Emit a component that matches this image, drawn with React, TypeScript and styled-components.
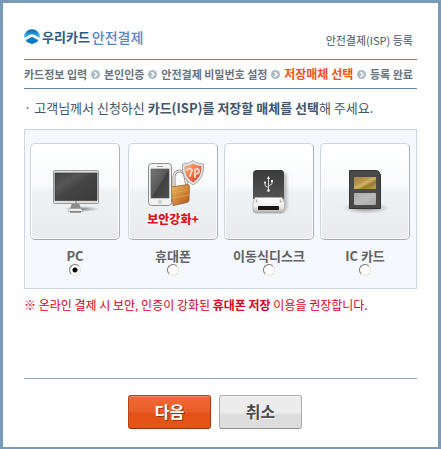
import React, { useState } from 'react';
import styled, { createGlobalStyle, css } from 'styled-components';

const GlobalStyle = createGlobalStyle`
  *, *::before, *::after { box-sizing: border-box; }
  html, body, #root { height: 100%; }
  body {
    margin: 0;
    background: #fff;
    color: #42566b;
    font-family: "Liberation Sans", "Noto Sans CJK KR", sans-serif;
  }
`;

const Page = styled.main`
  display: flex;
  flex-direction: column;
  min-height: 100%;
  padding: 21px;
  padding-bottom: 18px;
  border: 3px solid #7899b8;
  border-bottom-width: 2px;
  background: #fff;
`;

const Header = styled.header`
  display: flex;
  justify-content: space-between;
  align-items: center;
  height: 35px;
  padding: 0 4px 10px 0;
`;

const Brand = styled.h1`
  display: flex;
  align-items: center;
  gap: 2px;
  margin: 0;
  color: #2c5a85;
  font: bold 13px/20px "Noto Sans CJK KR", sans-serif;
`;

const Service = styled.span`
  color: #5585cc;
  font-size: 14px;
  font-weight: 500;
`;

const PageTitle = styled.span`
  padding-top: 7px;
  color: #42566b;
  font: 11px/16px "Noto Sans CJK KR", sans-serif;
`;

const Steps = styled.ol`
  display: flex;
  justify-content: space-between;
  align-items: center;
  height: 30px;
  margin: 0;
  padding: 0 4px 0 0;
  border-top: 1px solid #6486a8;
  border-bottom: 1px solid #6486a8;
  list-style: none;
`;

const Step = styled.li<{ $current?: boolean }>`
  display: flex;
  align-items: center;
  gap: 3px;
  color: #667380;
  font: bold 11px/18px "Noto Sans CJK KR", sans-serif;
  white-space: nowrap;
  ${(p) => p.$current && css`
    color: #f9501a;
    font-size: 12px;
  `}
`;

const Guide = styled.p`
  margin: 0;
  padding: 9px 0 11px;
  font: 13px/20px "Noto Sans CJK KR", sans-serif;
  white-space: nowrap;
`;

const MediaPanel = styled.fieldset`
  display: grid;
  grid-template-columns: 98fr 96fr 96fr 90fr;
  min-width: 0;
  margin: 0;
  padding: 13px 6px 12px 5px;
  border: 1px solid #cdd6df;
  background: #f5f8fc;
`;

const MediaOption = styled.label`
  display: flex;
  flex-direction: column;
  align-items: center;
  width: 90px;
  cursor: pointer;
`;

const Tile = styled.span`
  display: flex;
  flex-direction: column;
  align-items: center;
  width: 90px;
  height: 97px;
  border: 1px solid #ccd6da;
  border-right-color: #acb0b4;
  border-bottom-color: #a4a8ac;
  border-radius: 5px;
  background: linear-gradient(#fff 0%, #f8fafb 44%, #eef2f5 50%, #e9ebef 100%);
  box-shadow: inset 0 0 0 1px #fff;
`;

const Emphasis = styled.span`
  color: #e3101c;
  font: 900 12px/20px "Noto Sans CJK KR", sans-serif;
  text-shadow: 1px 0 2px #fff, -1px 0 2px #fff, 0 1px 2px #fff, 0 -1px 2px #fff;
`;

const MediaName = styled.span`
  margin-top: 7px;
  color: #626366;
  font: bold 13px/17px "Noto Sans CJK KR", sans-serif;
  white-space: nowrap;
`;

const Radio = styled.input`
  width: 12px;
  height: 12px;
  margin: 0;
  appearance: none;
  border: 1px solid;
  border-color: #77746c #e6e3d8 #e6e3d8 #77746c;
  border-radius: 50%;
  background: #fff;
  &:checked { background: radial-gradient(circle, #000 0 2px, #fff 3px); }
`;

const Notice = styled.p`
  margin: 0;
  padding: 6px 0 63px;
  color: #e1001f;
  font: 12px/20px "Noto Sans CJK KR", sans-serif;
  white-space: nowrap;
`;

const Actions = styled.footer`
  display: flex;
  justify-content: center;
  gap: 8px;
  padding: 16px 11px 0 0;
  border-top: 1px solid #8fa9c0;
`;

const ActionButton = styled.button<{ $primary?: boolean }>`
  width: 83px;
  height: 34px;
  padding: 0 0 2px;
  border: 1px solid #a9abae;
  border-bottom-color: #8e9092;
  border-radius: 3px;
  background: linear-gradient(#ececec 0 50%, #dddddd 60% 100%);
  box-shadow: inset 0 1px #f7f7f7;
  color: #4b4b4b;
  font: bold 16px/20px "Noto Sans CJK KR", sans-serif;
  text-shadow: 1px 1px #fff;
  cursor: pointer;
  ${(p) => p.$primary && css`
    border-color: #b44516 #a83c10 #963208 #b44516;
    background: linear-gradient(#f06a36 0%, #ea5d28 49%, #e45218 55%, #e65317 100%);
    box-shadow: inset 0 1px #f58b62;
    color: #fff;
    text-shadow: 1px 1px #8f3510;
  `}
`;

const BrandMark = () => (
  <svg width="16" height="15" viewBox="0 0 16 15" aria-hidden="true">
    <defs>
      <linearGradient id="brand" x2="0" y2="1">
        <stop stopColor="#0a61ae" />
        <stop offset=".5" stopColor="#39b3e6" />
        <stop offset="1" stopColor="#0878c4" />
      </linearGradient>
    </defs>
    <ellipse cx="8" cy="7.5" rx="7.8" ry="7.2" fill="url(#brand)" />
    <path d="M0 10.500V9C3 8 4.500 5.500 8 5.500S13 8 16 9V10.500Q13.500 11 12 10Q8 6.500 4 10Q2.500 11 0 10.500Z" fill="#fff" />
    <path d="M2.500 11Q4.500 10.500 5.500 9.500Q8 7 10.500 9.500Q11.500 10.500 13.500 11Q11.500 14.600 8 14.600T2.500 11Z" fill="#0b78c4" />
  </svg>
);

const StepArrow = () => (
  <svg width="9" height="9" viewBox="0 0 9 9" aria-hidden="true">
    <circle cx="4.500" cy="4.500" r="4.500" fill="#adb9c5" />
    <path d="M3.500 2L6 4.500L3.500 7" fill="none" stroke="#fff" strokeWidth="1.500" />
  </svg>
);

const MonitorArt = () => (
  <svg width="88" height="95" viewBox="1 1 88 95" aria-hidden="true">
    <defs>
      <linearGradient id="screen" x2="1" y2="1">
        <stop stopColor="#434343" /><stop offset=".3" stopColor="#565656" />
        <stop offset=".5" stopColor="#444" /><stop offset="1" stopColor="#3b3b3b" />
      </linearGradient>
      <radialGradient id="floor"><stop stopColor="#555" stopOpacity=".75" /><stop offset="1" stopColor="#777" stopOpacity="0" /></radialGradient>
    </defs>
    <ellipse cx="52" cy="66" rx="18" ry="3" fill="url(#floor)" />
    <path d="M42 60H49L51 66H40Z" fill="#8c8c8c" />
    <path d="M40 65.500H51L53 68.500H38Z" fill="#eee" stroke="#999" strokeWidth=".6" />
    <path d="M40 69H51" stroke="#555" />
    <rect x="23.500" y="27.500" width="45" height="33" rx="1" fill="#dedede" stroke="#999" />
    <rect x="25" y="30" width="42" height="27.500" fill="url(#screen)" stroke="#343434" strokeWidth=".6" />
    <circle cx="46" cy="59" r=".8" fill="#555" />
  </svg>
);

const PhoneArt = () => (
  <svg width="88" height="65" viewBox="1 1 88 65" aria-hidden="true">
    <defs>
      <linearGradient id="phone" x2="1" y2="1">
        <stop stopColor="#777" /><stop offset=".5" stopColor="#575757" /><stop offset=".52" stopColor="#414141" /><stop offset="1" stopColor="#4f4f4f" />
      </linearGradient>
      <linearGradient id="brass" x2="1" y2="1">
        <stop stopColor="#efbb68" /><stop offset=".55" stopColor="#cf8337" /><stop offset="1" stopColor="#a7591d" />
      </linearGradient>
      <linearGradient id="shield" x2="1" y2="1">
        <stop stopColor="#f8b18a" /><stop offset=".5" stopColor="#ef7448" /><stop offset="1" stopColor="#cf3519" />
      </linearGradient>
    </defs>
    <path d="M46 45V36C45 27 55 25 57 33L59 43" fill="none" stroke="#8b8078" strokeWidth="3" />
    <path d="M46 45V36C45 27 55 25 57 33L59 43" fill="none" stroke="#ece6df" strokeWidth="1.500" />
    <path d="M43 44L60 41.500Q61.500 42 61.500 44L61 57Q61 59 59 59.500L45 62.500Z" fill="url(#brass)" stroke="#8f5422" strokeWidth=".7" />
    <path d="M44 50L61 47M44 55L61 52" stroke="#e5a75a" strokeWidth=".6" />
    <rect x="20.500" y="20.500" width="23" height="42" rx="3" fill="#f2f2f2" stroke="#8d8d8d" />
    <rect x="23" y="26" width="18" height="29" fill="url(#phone)" stroke="#555" strokeWidth=".6" />
    <path d="M29 23.500H35" stroke="#999" />
    <circle cx="32" cy="59" r="1.800" fill="#ddd" stroke="#bbb" strokeWidth=".6" />
    <path d="M65 17.500Q69 21 75.500 21Q77 36 65 42Q53 36 54.500 21Q61 21 65 17.500Z" fill="#e2e4e6" stroke="#999" strokeWidth=".8" />
    <path d="M65 20.500Q69 23 73.500 23Q74 34 65 39.500Q56 34 56.500 23Q61 23 65 20.500Z" fill="url(#shield)" />
    <path d="M59 27Q62 24 64 27L62 33M67 34V27Q70 24 71 28Q71 31 67 31" fill="none" stroke="#ffe5d8" strokeWidth="2" strokeLinecap="round" opacity=".85" />
  </svg>
);

const DriveArt = () => (
  <svg width="88" height="95" viewBox="1 1 88 95" aria-hidden="true">
    <defs>
      <linearGradient id="drive" x2="0" y2="1"><stop stopColor="#393939" /><stop offset="1" stopColor="#555" /></linearGradient>
      <linearGradient id="plug" x2="0" y2="1"><stop stopColor="#fff" /><stop offset=".6" stopColor="#ececec" /><stop offset="1" stopColor="#aaa" /></linearGradient>
      <filter id="driveShade"><feGaussianBlur stdDeviation="1.500" /></filter>
    </defs>
    <rect x="31" y="29" width="32" height="40" rx="5" fill="#777" opacity=".45" filter="url(#driveShade)" />
    <path d="M29 56V31Q29 27 33 27H57Q60 27 60 31V56Z" fill="url(#drive)" />
    <path d="M31 54.500H58L60.500 60V67Q60 70 57 70H32Q29 70 29 67V60Z" fill="url(#plug)" stroke="#aaa" strokeWidth=".7" />
    <rect x="34" y="63" width="21" height="4" rx=".8" fill="#171717" />
    <path d="M33 56.500L32 59.500M56 56.500L57 59.500" stroke="#aaa" strokeWidth="1.200" />
    <path d="M44.500 35V47M44.500 45L41 42.500V39.500M44.500 43L48 41V38" fill="none" stroke="#e2e2e2" strokeWidth=".9" />
    <path d="M43 36L44.500 33L46 36Z" fill="#fff" />
    <circle cx="44.500" cy="47.500" r="1.300" fill="#fff" /><circle cx="41" cy="39.500" r="1" fill="#fff" />
    <path d="M47 37H49V39H47Z" fill="#fff" />
  </svg>
);

const CardArt = () => (
  <svg width="88" height="95" viewBox="1 1 88 95" aria-hidden="true">
    <defs>
      <linearGradient id="gold" x2="1" y2="1">
        <stop stopColor="#a98445" /><stop offset=".35" stopColor="#b69448" /><stop offset=".52" stopColor="#cdb564" /><stop offset=".68" stopColor="#9b7833" /><stop offset="1" stopColor="#c5a853" />
      </linearGradient>
      <linearGradient id="silver" x2="1" y2="1"><stop stopColor="#aaa" /><stop offset=".5" stopColor="#bbb" /><stop offset="1" stopColor="#a6a6a6" /></linearGradient>
      <radialGradient id="cardShade"><stop stopColor="#444" stopOpacity=".65" /><stop offset="1" stopColor="#777" stopOpacity="0" /></radialGradient>
    </defs>
    <ellipse cx="46" cy="65" rx="24" ry="6" fill="url(#cardShade)" />
    <path d="M29.500 27.500H56Q58 27.500 59 29L60.500 32V65.500H29.500Z" fill="#494949" stroke="#343434" />
    <rect x="34" y="34" width="22" height="12" fill="url(#gold)" />
    <rect x="34" y="50" width="22" height="12" rx="1" fill="url(#silver)" />
  </svg>
);

const steps = ['카드정보 입력', '본인인증', '안전결제 비밀번호 설정', '저장매체 선택', '등록 완료'];

const media = [
  { id: 'pc', name: 'PC', Art: MonitorArt },
  { id: 'phone', name: '휴대폰', Art: PhoneArt, emphasis: '보안강화+' },
  { id: 'drive', name: '이동식디스크', Art: DriveArt },
  { id: 'card', name: 'IC 카드', Art: CardArt },
];

export default function App() {
  const [selected, setSelected] = useState('pc');
  return (
    <>
      <GlobalStyle />
      <Page>
        <Header>
          <Brand><BrandMark />우리카드 <Service>안전결제</Service></Brand>
          <PageTitle>안전결제(ISP) 등록</PageTitle>
        </Header>
        <Steps>
          {steps.map((step, index) => (
            <React.Fragment key={step}>
              {index > 0 && <Step aria-hidden="true"><StepArrow /></Step>}
              <Step $current={index === 3} aria-current={index === 3 ? 'step' : undefined}>{step}</Step>
            </React.Fragment>
          ))}
        </Steps>
        <Guide>· 고객님께서 신청하신 <b>카드(ISP)를 저장할 매체를 선택</b>해 주세요.</Guide>
        <MediaPanel aria-label="저장매체 선택">
          {media.map(({ id, name, Art, emphasis }) => (
            <MediaOption key={id} htmlFor={id}>
              <Tile>
                <Art />
                {emphasis && <Emphasis>{emphasis}</Emphasis>}
              </Tile>
              <MediaName>{name}</MediaName>
              <Radio id={id} type="radio" name="media" checked={selected === id} onChange={() => setSelected(id)} />
            </MediaOption>
          ))}
        </MediaPanel>
        <Notice>※ 온라인 결제 시 보안, 인증이 강화된 <b>휴대폰 저장</b> 이용을 권장합니다.</Notice>
        <Actions>
          <ActionButton type="button" $primary>다음</ActionButton>
          <ActionButton type="button">취소</ActionButton>
        </Actions>
      </Page>
    </>
  );
}
